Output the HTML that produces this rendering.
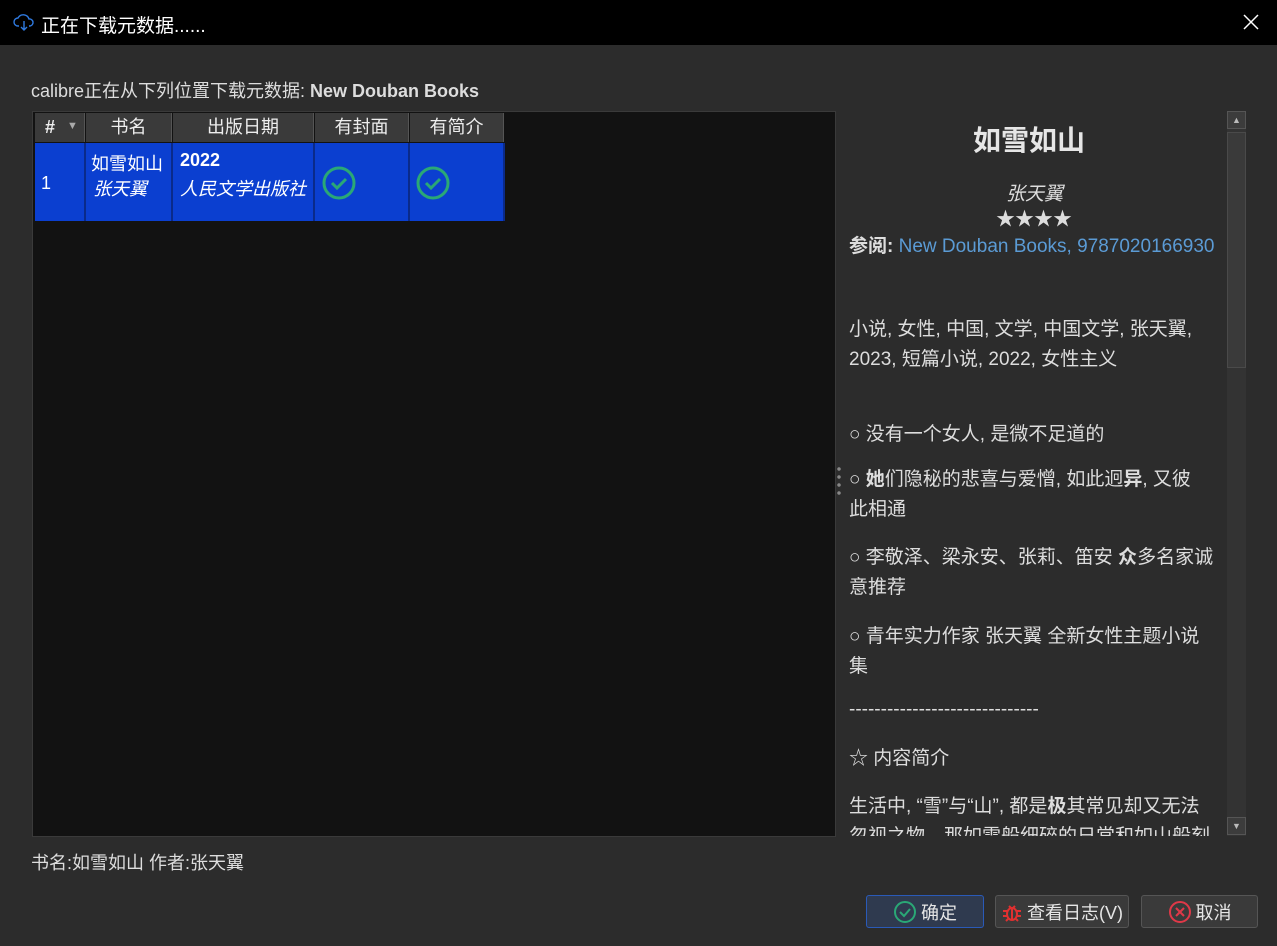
<!DOCTYPE html>
<html><head><meta charset="utf-8"><style>
*{margin:0;padding:0;box-sizing:border-box}
body{width:1277px;height:946px;background:#2c2c2c;font-family:"Liberation Sans","Noto Sans CJK SC",sans-serif;color:#e6e6e6;position:relative;overflow:hidden}
.a{position:absolute;white-space:nowrap}
.title{left:0;top:0;width:1277px;height:45px;background:#000}
.hd{position:absolute;top:113px;height:29px;background:#3a3a3a;border-right:1px solid #555;font-size:18px;text-align:center;line-height:29px;color:#eee}
.cell{position:absolute;top:143px;height:78px;background:#0b3fd0;border-right:2px solid #0a2a8a;color:#fff}
.p{font-size:19px;color:#ddd;left:849px}
.btn{position:absolute;top:895px;height:33px;background:#3a3a3a;border:1px solid #555;border-radius:3px;font-size:18px;color:#e6e6e6;display:flex;align-items:center;justify-content:center;gap:4px}
</style></head><body>
<div class="a title"></div>
<svg class="a" style="left:13px;top:13px" width="22" height="18" viewBox="0 0 22 18"><path d="M6 13H5a4 4 0 0 1 0-8 6 6 0 0 1 11 1 3.5 3.5 0 0 1 1 7h-1M11 8v9M8 14l3 3 3-3" fill="none" stroke="#2f7ae0" stroke-width="1.4"/></svg>
<div class="a" style="left:41px;top:11px;font-size:19px;color:#fff">正在下载元数据......</div>
<svg class="a" style="left:1243px;top:14px" width="16" height="16"><path d="M1 1l14 14M15 1L1 15" stroke="#fff" stroke-width="1.5"/></svg>
<div class="a" style="left:31px;top:77px;font-size:18px;color:#ddd">calibre正在从下列位置下载元数据: <b>New Douban Books</b></div>
<div class="a" style="left:32px;top:111px;width:804px;height:726px;background:#121212;border:1px solid #3a3a3a"></div>
<div class="hd" style="left:35px;width:50px;font-weight:bold;text-align:left;padding-left:10px">#<span style="position:absolute;left:32px;top:-1px;font-size:11px;color:#aaa">▼</span></div>
<div class="hd" style="left:86px;width:86px">书名</div>
<div class="hd" style="left:173px;width:141px">出版日期</div>
<div class="hd" style="left:315px;width:94px">有封面</div>
<div class="hd" style="left:410px;width:94px">有简介</div>
<div class="cell" style="left:35px;width:51px"><div class="a" style="left:6px;top:30px;font-size:18px">1</div></div>
<div class="cell" style="left:86px;width:87px"><div class="a" style="left:5px;top:7px;font-size:18px">如雪如山</div><div class="a" style="left:7px;top:32px;font-size:18px;font-style:italic">张天翼</div></div>
<div class="cell" style="left:173px;width:142px"><div class="a" style="left:7px;top:7px;font-size:18px;font-weight:bold">2022</div><div class="a" style="left:7px;top:32px;font-size:18px;font-style:italic">人民文学出版社</div></div>
<div class="cell" style="left:315px;width:95px"><svg class="a" style="left:7px;top:23px" width="34" height="34"><circle cx="17" cy="17" r="15" fill="none" stroke="#2aa876" stroke-width="3"/><path d="M10 17l5 5 9-9" fill="none" stroke="#2aa876" stroke-width="3"/></svg></div>
<div class="cell" style="left:410px;width:95px"><svg class="a" style="left:6px;top:23px" width="34" height="34"><circle cx="17" cy="17" r="15" fill="none" stroke="#2aa876" stroke-width="3"/><path d="M10 17l5 5 9-9" fill="none" stroke="#2aa876" stroke-width="3"/></svg></div>
<div class="a" style="left:837px;top:465px;width:4px;height:32px;background:radial-gradient(circle,#888 1.5px,transparent 2px) 0 0/4px 8px"></div>
<div class="a" style="left:31px;top:849px;font-size:18px;color:#ddd">书名:如雪如山 作者:张天翼</div>
<div class="a" style="left:973px;top:119px;font-size:28px;font-weight:bold;color:#e6e6e6">如雪如山</div>
<div class="a" style="left:1006px;top:179px;font-size:19px;font-style:italic;color:#ddd">张天翼</div>
<div class="a" style="left:996px;top:204px;font-size:19px;color:#ddd">★★★★</div>
<div class="a p" style="top:231px"><b>参阅:</b> <span style="color:#5b9bd5">New Douban Books, 9787020166930</span></div>
<div class="a p" style="top:314px">小说, 女性, 中国, 文学, 中国文学, 张天翼,</div>
<div class="a p" style="top:344px">2023, 短篇小说, 2022, 女性主义</div>
<div class="a p" style="top:419px">○ 没有一个女人, 是微不足道的</div>
<div class="a p" style="top:464px">○ <b>她</b>们隐秘的悲喜与爱憎, 如此迥<b>异</b>, 又彼</div>
<div class="a p" style="top:494px">此相通</div>
<div class="a p" style="top:542px">○ 李敬泽、梁永安、张莉、笛安 <b>众</b>多名家诚</div>
<div class="a p" style="top:572px">意推荐</div>
<div class="a p" style="top:621px">○ 青年实力作家 张天翼 全新女性主题小说</div>
<div class="a p" style="top:651px">集</div>
<div class="a p" style="top:699px">------------------------------</div>
<div class="a p" style="top:743px">☆ 内容简介</div>
<div class="a p" style="top:791px">生活中, “雪”与“山”, 都是<b>极</b>其常见却又无法</div>
<div class="a" style="left:849px;top:820px;width:375px;height:16px;overflow:hidden"><div class="a" style="left:0;top:1px;font-size:19px;color:#ddd">忽视之物。那如雪般细碎的日常和如山般刻</div></div>
<div class="a" style="left:1227px;top:111px;width:19px;height:725px;background:#333"></div>
<div class="a" style="left:1227px;top:111px;width:19px;height:18px;background:#3c3c3c;border:1px solid #555;font-size:9px;color:#bbb;text-align:center;line-height:16px">▲</div>
<div class="a" style="left:1227px;top:132px;width:19px;height:236px;background:#3a3a3a;border:1px solid #4a4a4a"></div>
<div class="a" style="left:1227px;top:817px;width:19px;height:18px;background:#3c3c3c;border:1px solid #555;font-size:9px;color:#bbb;text-align:center;line-height:16px">▼</div>
<div class="btn" style="left:866px;width:118px;border:1px solid #2a5ab8;background:#2f3a4f"><svg width="24" height="24"><circle cx="12" cy="12" r="10" fill="none" stroke="#2aa876" stroke-width="2"/><path d="M7 12l4 4 6-7" fill="none" stroke="#2aa876" stroke-width="2"/></svg>确定</div>
<div class="btn" style="left:995px;width:134px"><svg width="22" height="22" viewBox="0 0 22 22"><ellipse cx="11" cy="13" rx="5" ry="6" fill="none" stroke="#e03030" stroke-width="2"/><path d="M8 5l2 2M14 5l-2 2M2 10h4M16 10h4M2 15h4M16 15h4M5 20l2-2M17 20l-2-2M11 8v11" stroke="#e03030" stroke-width="2"/></svg>查看日志(V)</div>
<div class="btn" style="left:1141px;width:117px"><svg width="24" height="24"><circle cx="12" cy="12" r="10" fill="none" stroke="#e03848" stroke-width="2"/><path d="M8 8l8 8M16 8l-8 8" stroke="#e03848" stroke-width="2"/></svg>取消</div>
</body></html>
